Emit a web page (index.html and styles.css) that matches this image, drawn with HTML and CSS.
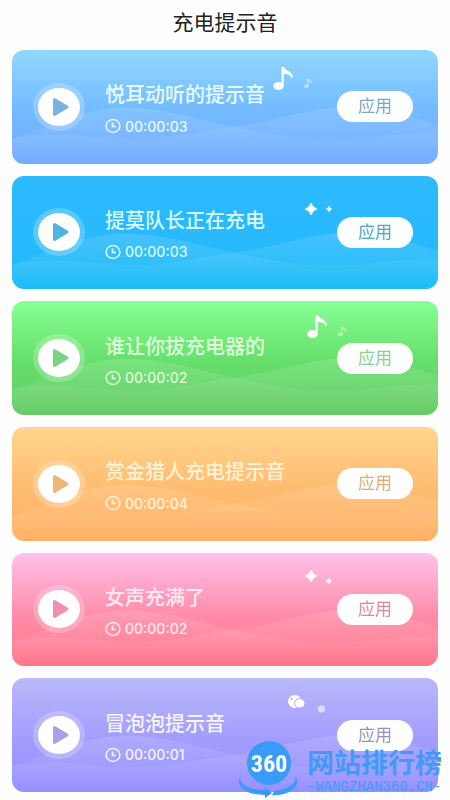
FILE: index.html
```html
<!DOCTYPE html>
<html lang="zh-CN">
<head>
<meta charset="utf-8">
<meta name="viewport" content="width=device-width, initial-scale=1">
<title>充电提示音</title>
<link rel="stylesheet" href="styles.css">
</head>
<body>
<svg class="defs" aria-hidden="true">
  <defs>
    <linearGradient id="fade" x1="0" y1="0" x2="0" y2="1">
      <stop offset="0" stop-color="#fff" stop-opacity=".13"/>
      <stop offset="1" stop-color="#fff" stop-opacity="0"/>
    </linearGradient>
    <symbol id="waves" viewBox="0 0 425 114" preserveAspectRatio="none">
      <path fill="url(#fade)" d="M0 89C35 78 70 58 113 58C155 58 185 70 222 77C260 85 290 91 325 90C360 89 390 82 425 84V114H0Z"/>
      <path fill="url(#fade)" d="M0 89C20 85 40 84 65 86C95 88 120 91 150 88C180 85 200 79 222 77C260 72 300 57 340 57C375 57 400 68 425 75V114H0Z"/>
    </symbol>
    <symbol id="play" viewBox="0 0 52 48">
      <ellipse cx="26" cy="24" rx="26" ry="24" fill="#fff" fill-opacity=".22"/>
      <ellipse cx="26" cy="24" rx="21" ry="19" fill="#fff"/>
      <path d="M21.500 16.500L34 24L21.500 31.500Z" fill="currentColor" stroke="currentColor" stroke-width="3" stroke-linejoin="round"/>
    </symbol>
    <symbol id="clock" viewBox="0 0 16 16">
      <ellipse cx="8" cy="8" rx="6.900" ry="6.400" fill="none" stroke="currentColor" stroke-width="1.500"/>
      <path d="M7.500 4.500V8.500H11" fill="none" stroke="currentColor" stroke-width="1.700"/>
    </symbol>
    <symbol id="notes" viewBox="0 0 40 24">
      <ellipse cx="5.500" cy="19" rx="5.200" ry="4" fill="#fff"/>
      <path fill="#fff" d="M8.500 19V0H11C12 4 20 4 20 11L18.500 10.500C17 7.500 13 7 10.700 6.500V19Z"/>
      <g fill="#fff" opacity=".55">
        <ellipse cx="33.300" cy="19.300" rx="2.200" ry="1.700"/>
        <path d="M34.500 19V11.500H35.700C36.500 13.500 39.500 13.500 39.200 16.800C38.200 15 37 14.600 35.500 14.400V19Z"/>
      </g>
    </symbol>
    <symbol id="sparkle" viewBox="0 0 12 12">
      <path fill="#fff" d="M6 0Q7.300 4.700 12 6Q7.300 7.300 6 12Q4.700 7.300 0 6Q4.700 4.700 6 0Z" stroke="#fff" stroke-width=".8"/>
    </symbol>
    <symbol id="bubbles" viewBox="0 0 38 18">
      <ellipse cx="7" cy="6.500" rx="7" ry="6.500" fill="#fff"/>
      <circle cx="3.700" cy="3.700" r="1" fill="#9f9bf5"/>
      <ellipse cx="11.800" cy="8.300" rx="5.200" ry="4.800" fill="#fff" stroke="#aaa6f5"/>
      <circle cx="33.500" cy="14" r="3.600" fill="#fff" opacity=".6"/>
    </symbol>
  </defs>
</svg>

<main class="page">
  <h1 class="title">充电提示音</h1>
  <ul class="list">
    <li class="card sky">
      <svg class="waves" aria-hidden="true"><use href="#waves"/></svg>
      <svg class="deco notes high" aria-hidden="true"><use href="#notes"/></svg>
      <button class="play" aria-label="播放"><svg aria-hidden="true"><use href="#play"/></svg></button>
      <div class="info">
        <h2 class="name">悦耳动听的提示音</h2>
        <p class="time"><svg aria-hidden="true"><use href="#clock"/></svg>00:00:03</p>
      </div>
      <button class="apply">应用</button>
    </li>
    <li class="card blue">
      <svg class="waves" aria-hidden="true"><use href="#waves"/></svg>
      <svg class="deco sparkles" viewBox="0 0 28 16" aria-hidden="true"><use href="#sparkle" width="12" height="12"/><use href="#sparkle" x="21" y="3" width="6" height="6"/></svg>
      <button class="play" aria-label="播放"><svg aria-hidden="true"><use href="#play"/></svg></button>
      <div class="info">
        <h2 class="name">提莫队长正在充电</h2>
        <p class="time"><svg aria-hidden="true"><use href="#clock"/></svg>00:00:03</p>
      </div>
      <button class="apply">应用</button>
    </li>
    <li class="card green">
      <svg class="waves" aria-hidden="true"><use href="#waves"/></svg>
      <svg class="deco notes" aria-hidden="true"><use href="#notes"/></svg>
      <button class="play" aria-label="播放"><svg aria-hidden="true"><use href="#play"/></svg></button>
      <div class="info">
        <h2 class="name">谁让你拔充电器的</h2>
        <p class="time"><svg aria-hidden="true"><use href="#clock"/></svg>00:00:02</p>
      </div>
      <button class="apply">应用</button>
    </li>
    <li class="card orange">
      <svg class="waves" aria-hidden="true"><use href="#waves"/></svg>
      <button class="play" aria-label="播放"><svg aria-hidden="true"><use href="#play"/></svg></button>
      <div class="info">
        <h2 class="name">赏金猎人充电提示音</h2>
        <p class="time"><svg aria-hidden="true"><use href="#clock"/></svg>00:00:04</p>
      </div>
      <button class="apply">应用</button>
    </li>
    <li class="card pink">
      <svg class="waves" aria-hidden="true"><use href="#waves"/></svg>
      <svg class="deco sparkles raised" viewBox="0 0 28 16" aria-hidden="true"><use href="#sparkle" width="12" height="12"/><use href="#sparkle" x="21" y="8" width="6" height="6"/></svg>
      <button class="play" aria-label="播放"><svg aria-hidden="true"><use href="#play"/></svg></button>
      <div class="info">
        <h2 class="name">女声充满了</h2>
        <p class="time"><svg aria-hidden="true"><use href="#clock"/></svg>00:00:02</p>
      </div>
      <button class="apply">应用</button>
    </li>
    <li class="card purple">
      <svg class="waves" aria-hidden="true"><use href="#waves"/></svg>
      <svg class="deco bubbles" aria-hidden="true"><use href="#bubbles"/></svg>
      <button class="play" aria-label="播放"><svg aria-hidden="true"><use href="#play"/></svg></button>
      <div class="info">
        <h2 class="name">冒泡泡提示音</h2>
        <p class="time"><svg aria-hidden="true"><use href="#clock"/></svg>00:00:01</p>
      </div>
      <button class="apply">应用</button>
    </li>
  </ul>
</main>

<aside class="brand">
  <svg class="logo" viewBox="0 0 60 58" aria-hidden="true">
    <circle cx="31" cy="23" r="22" fill="#389bf8"/>
    <path fill="#389bf8" d="M3 35C-4 46 8 55 27 55L27 58L34 53L27 47L27.500 50C12 50 -1 45 3 35Z"/>
    <path fill="#389bf8" d="M57 35C64 46 53 55 34 55.500L36 51C50 49 60 44 57 35Z"/>
    <text class="logo-text" x="31" y="32" text-anchor="middle">360</text>
  </svg>
  <div class="brand-text">
    <strong class="brand-name">网站排行榜</strong>
    <span class="brand-url">-WANGZHAN360.CN-</span>
  </div>
</aside>
</body>
</html>
```
FILE: styles.css
```css
* {
  box-sizing: border-box;
}

body {
  position: relative;
  margin: 0;
  background: #fefefe;
  font-family: "Noto Sans CJK SC", sans-serif;
}

button {
  padding: 0;
  border: 0;
  font: inherit;
  cursor: pointer;
}

h1, h2, p, ul {
  margin: 0;
  padding: 0;
}

.defs {
  position: absolute;
  width: 0;
  height: 0;
}

.page {
  display: flex;
  flex-direction: column;
  min-height: 100vh;
  padding: 8px 12px;
}

.title {
  height: 42px;
  color: #222;
  font-size: 21px;
  font-weight: 400;
  line-height: 26px;
  text-align: center;
}

.list {
  display: grid;
  flex: 1;
  grid-auto-rows: 1fr;
  gap: 12px;
  list-style: none;
}

.card {
  position: relative;
  display: flex;
  align-items: center;
  min-height: 108px;
  padding: 0 25px 0 21px;
  overflow: hidden;
  border-radius: 12px;
  color: #fff;
}

.sky { background: linear-gradient(#91d8ff, #72b9ff 55%, #75abff); --accent: #7bb2e4; --label: #7ba6cd; --text: #e6fbff; }
.blue { background: linear-gradient(#2dbaff, #29b9fe 55%, #1bbdf5); --accent: #4fb4e2; --label: #4da3cb; --text: #d9faff; }
.green { background: linear-gradient(#88ff94, #65de6b 55%, #68ca66); --accent: #7bd384; --label: #86cf8d; --text: #dfffdc; }
.orange { background: linear-gradient(#ffd58f, #ffbc70 55%, #ffb164); --accent: #f0b477; --label: #d8af7c; --text: #fff3d7; }
.pink { background: linear-gradient(#fec2ea, #ff8ca9 55%, #ff7588); --accent: #f28fae; --label: #d48a9f; --text: #ffeaf3; }
.purple { background: linear-gradient(#bab8fb, #a29cfd 55%, #9590ff); --accent: #a6a1e8; --label: #9793bd; --text: #f6f5ff; }

.waves {
  position: absolute;
  inset: 0;
  width: 100%;
  height: 100%;
}

.deco {
  position: absolute;
}

.notes {
  top: 14px;
  right: 91px;
  width: 40px;
  height: 24px;
}

.notes.high {
  top: 17px;
  right: 125px;
}

.sparkles {
  top: 27px;
  right: 105px;
  width: 28px;
  height: 16px;
}

.sparkles.raised {
  top: 17px;
}

.bubbles {
  top: 17px;
  right: 112px;
  width: 38px;
  height: 18px;
}

.play {
  position: relative;
  width: 52px;
  height: 48px;
  background: none;
  color: var(--accent);
}

.play svg {
  display: block;
  width: 100%;
  height: 100%;
}

.info {
  position: relative;
  flex: 1;
  margin-left: 20px;
  padding-top: 7px;
  color: var(--text);
}

.name {
  font-size: 20px;
  font-weight: 500;
  line-height: 32px;
  white-space: nowrap;
}

.time {
  display: flex;
  align-items: center;
  gap: 4px;
  height: 32px;
  font-family: Inter, "Liberation Sans", sans-serif;
  font-size: 14px;
  font-weight: 500;
}

.time svg {
  width: 16px;
  height: 16px;
}

.apply {
  position: relative;
  width: 76px;
  height: 31px;
  padding-bottom: 3px;
  border-radius: 16px;
  background: #fff;
  color: var(--label);
  font-size: 17px;
  line-height: 28px;
}

.brand {
  position: absolute;
  right: 8px;
  bottom: 2px;
  display: flex;
  gap: 9px;
  color: #3f9bf7;
  pointer-events: none;
}

.logo {
  width: 60px;
  height: 58px;
}

.logo-text {
  fill: #fff;
  font: bold 24px "Liberation Sans Narrow", "Roboto Condensed", Roboto, sans-serif;
}

.brand-text {
  display: flex;
  flex-direction: column;
  gap: 4px;
  padding-top: 8px;
}

.brand-name {
  font-size: 27px;
  font-weight: 700;
  line-height: 28px;
}

.brand-url {
  font-family: "Liberation Mono", monospace;
  font-size: 14px;
  line-height: 14px;
}
```
